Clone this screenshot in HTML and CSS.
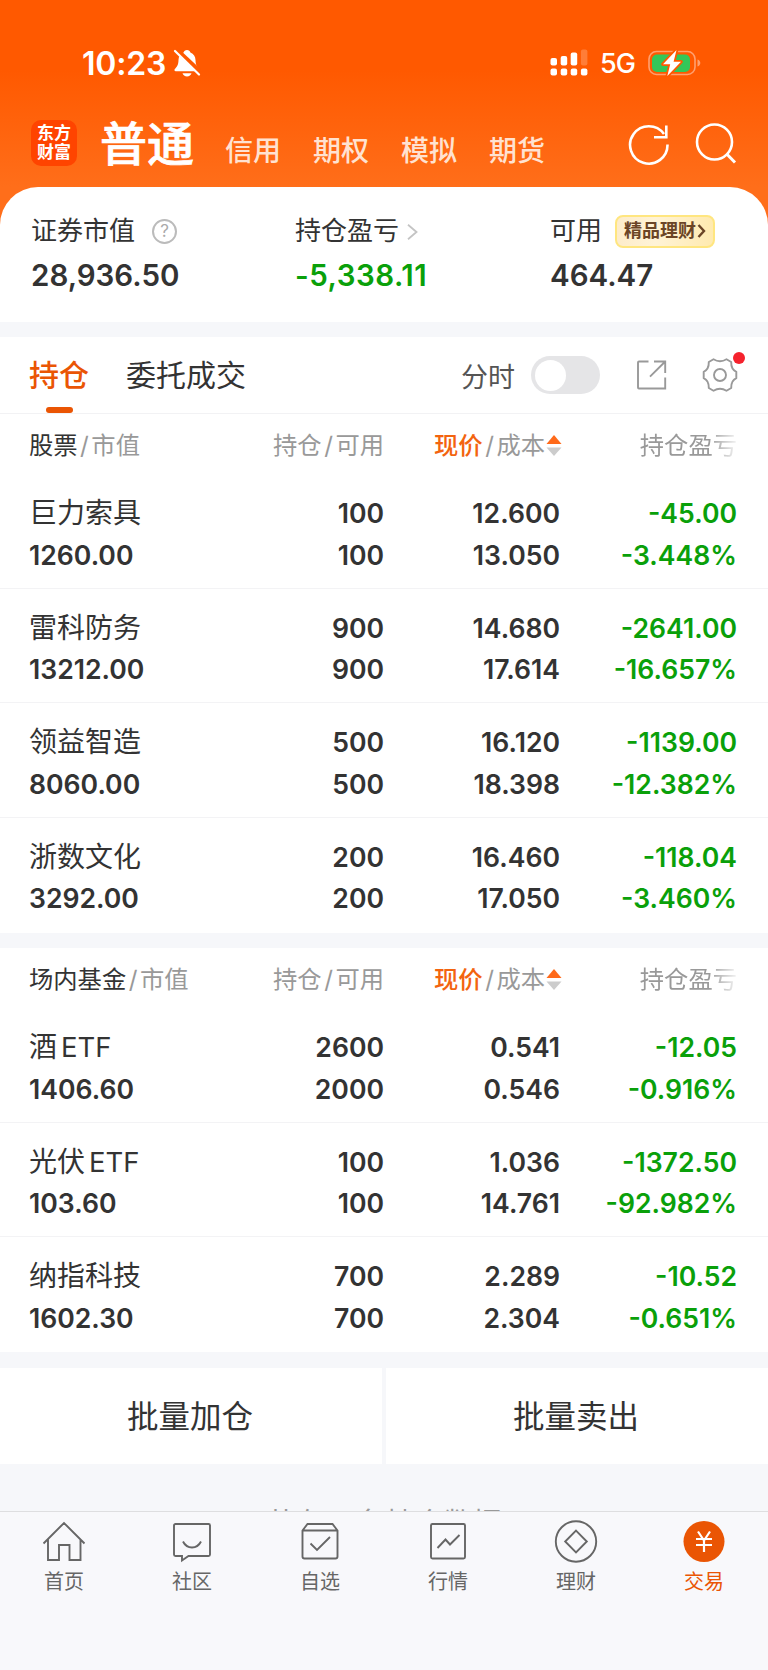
FILE: index.html
```html
<!DOCTYPE html>
<html lang="zh-CN">
<head>
    <meta charset="UTF-8">
    <meta name="viewport" content="width=device-width, initial-scale=1.0">
    <link rel="stylesheet" href="styles.css">
    <title>普通交易</title>
</head>
<body>
    <div class="app">
        <header class="header">
            <div class="status">
                <span class="time">10:23</span>
                <svg class="bell" width="28" height="30" viewBox="0 0 28 30">
                    <path d="M14 2c-1.800 0-3 1-3.400 2.500C7.300 5.800 5.600 8.600 5.500 12c-.1 5-1.500 6.800-3.700 9-.7.900-.3 2.200.9 2.200h22.600c1.200 0 1.600-1.300.9-2.200-2.200-2.200-3.600-4-3.700-9-.1-3.400-1.800-6.200-5.100-7.500C17 3 15.800 2 14 2z" fill="#fff"/>
                    <path d="M9.500 25.200h9c-.5 1.900-2.300 3.300-4.500 3.300s-4-1.400-4.500-3.300z" fill="#fff"/>
                    <path d="M3 1.500L28 25" stroke="#ff5900" stroke-width="5"/>
                    <path d="M2 3L26 26.500" stroke="#fff" stroke-width="2.200" stroke-linecap="round"/>
                </svg>
                <svg class="signal" width="38" height="28" viewBox="0 0 38 28" fill="#fff">
                    <rect x="0.500" y="9" width="6.500" height="7.500" rx="2"/>
                    <rect x="10.700" y="7" width="6.500" height="9.500" rx="2"/>
                    <rect x="20.700" y="3.500" width="6.500" height="13" rx="2"/>
                    <rect x="30.900" y="0.500" width="6.500" height="16" rx="2" opacity=".22"/>
                    <rect x="0.500" y="19.500" width="6.500" height="7" rx="2"/>
                    <rect x="10.700" y="19.500" width="6.500" height="7" rx="2"/>
                    <rect x="20.700" y="19.500" width="6.500" height="7" rx="2"/>
                    <rect x="30.900" y="19.500" width="6.500" height="7" rx="2"/>
                </svg>
                <span class="net">5G</span>
                <svg class="battery" width="53" height="28" viewBox="0 0 53 28">
                    <rect x="1" y="2.500" width="46" height="23" rx="7.500" fill="none" stroke="#ffa070" stroke-width="1.600"/>
                    <path d="M49.500 10.500c2 .6 2.800 2 2.800 3.500s-.8 2.900-2.800 3.500z" fill="#ffa070"/>
                    <rect x="4" y="5.500" width="38" height="17.500" rx="5" fill="#34c759"/>
                    <path d="M28.500 1L15 15.200h7.200L19.300 27 33 12.800h-7.400z" fill="#fff" stroke="#ff5900" stroke-width="3.500" stroke-linejoin="round" paint-order="stroke"/>
                </svg>
            </div>
            <div class="nav-top">
                <div class="logo"><span>东方</span><span>财富</span></div>
                <div class="account-tabs">
                    <span class="account-active">普通</span>
                    <span class="account">信用</span>
                    <span class="account">期权</span>
                    <span class="account">模拟</span>
                    <span class="account">期货</span>
                </div>
                <svg class="icon-refresh" width="42" height="44" viewBox="0 0 42 44" fill="none" stroke="#fff" stroke-width="2.600">
                    <path d="M39.500 22.500A18.700 18.700 0 1 1 36 12"/>
                    <path d="M38.300 3.500v11.800H26"/>
                </svg>
                <svg class="icon-search" width="42" height="44" viewBox="0 0 42 44" fill="none" stroke="#fff" stroke-width="2.600">
                    <circle cx="19.500" cy="20" r="17.500"/>
                    <path d="M32 32.300L40 40.500" stroke-width="3"/>
                </svg>
            </div>
        </header>

        <section class="summary">
            <div class="summary-item">
                <div class="summary-label">证券市值<span class="help">?</span></div>
                <div class="summary-value">28,936.50</div>
            </div>
            <div class="summary-item">
                <div class="summary-label">持仓盈亏
                    <svg class="chevron" width="11" height="16" viewBox="0 0 11 16" fill="none" stroke="#c4c4c4" stroke-width="1.800"><path d="M1 .8L9.500 8 1 15.200"/></svg>
                </div>
                <div class="summary-value profit down">-5,338.11</div>
            </div>
            <div class="summary-item">
                <div class="summary-label">可用
                    <span class="badge">精品理财<svg width="9" height="14" viewBox="0 0 9 14" fill="none" stroke="#6b4526" stroke-width="2.400"><path d="M1.500 1l5.500 6-5.500 6"/></svg></span>
                </div>
                <div class="summary-value">464.47</div>
            </div>
        </section>

        <section class="toolbar">
            <span class="tab tab-active">持仓</span>
            <span class="tab">委托成交</span>
            <span class="minute">分时</span>
            <span class="switch"></span>
            <svg class="icon-share" width="32" height="32" viewBox="0 0 32 32" fill="none" stroke="#999" stroke-width="1.900">
                <path d="M12.500 2.500H3a1 1 0 0 0-1 1v25a1 1 0 0 0 1 1h26.200V18.500"/>
                <path d="M18 2.500h11.200v11.500M29.200 2.500L14 17.700"/>
            </svg>
            <span class="settings">
                <svg width="36" height="36" viewBox="0 0 36 36" fill="none" stroke="#999" stroke-width="1.900" stroke-linejoin="round">
                    <path d="M11.500 2.300Q18 6.300 24.500 2.300L29.200 5Q29 12.300 34.300 14.800V21.200Q29 23.700 29.200 31L24.500 33.700Q18 29.700 11.500 33.700L6.800 31Q7 23.700 1.700 21.200V14.800Q7 12.300 6.800 5Z"/>
                    <circle cx="18" cy="18" r="6"/>
                </svg>
                <i class="dot"></i>
            </span>
        </section>

        <section class="holdings">
            <div class="row-head">
                <div><b>股票</b><i>/</i>市值</div>
                <div>持仓<i>/</i>可用</div>
                <div class="sort"><em>现价</em><i>/</i>成本<svg width="16" height="21" viewBox="0 0 16 21"><path d="M8 0l7.500 9H.5z" fill="#ff6a1a"/><path d="M8 21l7.500-8.500H.5z" fill="#ccc"/></svg></div>
                <div class="fade">持仓盈亏</div>
            </div>
            <div class="row">
                <div><span class="name">巨力索具</span><span>1260.00</span></div>
                <div><span>100</span><span>100</span></div>
                <div><span>12.600</span><span>13.050</span></div>
                <div class="down"><span>-45.00</span><span>-3.448%</span></div>
            </div>
            <div class="row">
                <div><span class="name">雷科防务</span><span>13212.00</span></div>
                <div><span>900</span><span>900</span></div>
                <div><span>14.680</span><span>17.614</span></div>
                <div class="down"><span>-2641.00</span><span>-16.657%</span></div>
            </div>
            <div class="row">
                <div><span class="name">领益智造</span><span>8060.00</span></div>
                <div><span>500</span><span>500</span></div>
                <div><span>16.120</span><span>18.398</span></div>
                <div class="down"><span>-1139.00</span><span>-12.382%</span></div>
            </div>
            <div class="row">
                <div><span class="name">浙数文化</span><span>3292.00</span></div>
                <div><span>200</span><span>200</span></div>
                <div><span>16.460</span><span>17.050</span></div>
                <div class="down"><span>-118.04</span><span>-3.460%</span></div>
            </div>
        </section>

        <section class="holdings">
            <div class="row-head">
                <div><b>场内基金</b><i>/</i>市值</div>
                <div>持仓<i>/</i>可用</div>
                <div class="sort"><em>现价</em><i>/</i>成本<svg width="16" height="21" viewBox="0 0 16 21"><path d="M8 0l7.500 9H.5z" fill="#ff6a1a"/><path d="M8 21l7.500-8.500H.5z" fill="#ccc"/></svg></div>
                <div class="fade">持仓盈亏</div>
            </div>
            <div class="row">
                <div><span class="name">酒<u>ETF</u></span><span>1406.60</span></div>
                <div><span>2600</span><span>2000</span></div>
                <div><span>0.541</span><span>0.546</span></div>
                <div class="down"><span>-12.05</span><span>-0.916%</span></div>
            </div>
            <div class="row">
                <div><span class="name">光伏<u>ETF</u></span><span>103.60</span></div>
                <div><span>100</span><span>100</span></div>
                <div><span>1.036</span><span>14.761</span></div>
                <div class="down"><span>-1372.50</span><span>-92.982%</span></div>
            </div>
            <div class="row">
                <div><span class="name">纳指科技</span><span>1602.30</span></div>
                <div><span>700</span><span>700</span></div>
                <div><span>2.289</span><span>2.304</span></div>
                <div class="down"><span>-10.52</span><span>-0.651%</span></div>
            </div>
        </section>

        <div class="batch">
            <div class="batch-btn">批量加仓</div>
            <div class="batch-btn">批量卖出</div>
        </div>
        <div class="total"><span>共有 7 条持仓数据</span></div>

        <nav class="tabbar">
            <div class="tabbar-item">
                <svg width="44" height="44" viewBox="0 0 44 44"><path d="M1.500 23.500L22 3l20.500 20.500M6 19.500V40h11V25h10.500v15H38.500V19.500"/></svg>
                <span>首页</span>
            </div>
            <div class="tabbar-item">
                <svg width="44" height="44" viewBox="0 0 44 44"><path d="M11 36H5.500a1.500 1.500 0 0 1-1.500-1.500V5.500A1.500 1.500 0 0 1 5.500 4h33A1.500 1.500 0 0 1 40 5.500v29a1.500 1.500 0 0 1-1.500 1.500H18.500L12 40.500V36zM13 21.500c4 8 14 8 18 0"/></svg>
                <span>社区</span>
            </div>
            <div class="tabbar-item">
                <svg width="44" height="44" viewBox="0 0 44 44"><path d="M4.500 10.500L9.500 4h25l5 6.500V36.500a2 2 0 0 1-2 2h-31a2 2 0 0 1-2-2zM4.500 10.500h35M12.500 23.500l6.500 6.500L32 17"/></svg>
                <span>自选</span>
            </div>
            <div class="tabbar-item">
                <svg width="44" height="44" viewBox="0 0 44 44"><rect x="5" y="4" width="34" height="34.500" rx="1.500"/><path d="M11.500 28l8-8.500L24 24.500l9.500-9.500"/></svg>
                <span>行情</span>
            </div>
            <div class="tabbar-item">
                <svg width="44" height="44" viewBox="0 0 44 44"><circle cx="22" cy="21.500" r="20.200"/><path d="M22 10.700L32.800 21.500 22 32.300 11.200 21.500z"/></svg>
                <span>理财</span>
            </div>
            <div class="tabbar-item tabbar-active">
                <svg width="44" height="44" viewBox="0 0 44 44"><circle class="coin" cx="22" cy="21.500" r="20.500"/><path class="yen" d="M16 11.500l6 9 6-9M22 20.500V32M14 19h16M14 25h16"/></svg>
                <span>交易</span>
            </div>
        </nav>
    </div>
</body>
</html>
```

FILE: styles.css
```css
* {
    box-sizing: border-box;
}

body {
    margin: 0;
    background-color: #f6f7fa;
    font-family: Inter, "Noto Sans CJK SC", sans-serif;
    color: #333;
}

.app {
    width: 768px;
    height: 1670px;
    overflow: hidden;
    display: flex;
    flex-direction: column;
}

svg {
    display: block;
    flex: none;
}

b, i, em, u {
    font-style: normal;
    font-weight: inherit;
    text-decoration: none;
}

.down {
    color: #0aa00a;
}

/* header */
.header {
    height: 229px;
    flex: none;
    padding-top: 42px;
    background: linear-gradient(#ff5900 0, #ff5900 70px, #ff6e1a 187px);
    color: #fff;
}

.status {
    height: 42px;
    padding: 0 67px 0 82px;
    display: flex;
    align-items: center;
}

.time {
    width: 91px;
    font-size: 32px;
    font-weight: 600;
    letter-spacing: -0.2px;
}

.signal {
    margin-left: auto;
}

.net {
    width: 48px;
    margin-left: 12px;
    font-size: 27px;
    font-weight: 500;
    letter-spacing: -1px;
}

.nav-top {
    height: 76px;
    padding: 0 31px;
    display: flex;
    align-items: center;
    margin-top: 22px;
}

.logo {
    width: 46px;
    height: 46px;
    margin-top: -2px;
    border-radius: 10px;
    background-color: #ff4400;
    display: flex;
    flex-direction: column;
    align-items: center;
    justify-content: center;
    font-size: 17px;
    line-height: 19px;
    font-weight: 700;
}

.account-tabs {
    flex: 1;
    display: flex;
    align-items: center;
    margin-left: 23px;
    line-height: 60px;
}

.account-active {
    width: 125px;
    font-size: 47px;
    font-weight: 500;
    -webkit-text-stroke: 0.7px #fff;
}

.account {
    width: 88px;
    padding-top: 13px;
    font-size: 28px;
    font-weight: 500;
    color: #ffe2d1;
}

.icon-search {
    margin-left: 25px;
}

/* summary */
.summary {
    height: 135px;
    flex: none;
    margin-top: -42px;
    padding: 24px 0 0 31px;
    border-radius: 38px 38px 0 0;
    background-color: #fff;
    display: grid;
    grid-template-columns: 264px 255px 1fr;
}

.summary-label {
    height: 42px;
    padding-bottom: 2px;
    display: flex;
    align-items: center;
    font-size: 26px;
    line-height: 36px;
}

.help {
    width: 25px;
    height: 25px;
    margin: 1px 0 0 17px;
    border: 2px solid #bbb;
    border-radius: 50%;
    font-size: 17px;
    line-height: 21px;
    text-align: center;
    color: #aaa;
}

.chevron {
    margin: 2px 0 0 8px;
}

.badge {
    width: 100px;
    height: 33px;
    margin: 0 0 0 13px;
    border: 2px solid #ffe680;
    border-radius: 8px;
    background: linear-gradient(90deg, #fdeccb, #fff3d6 40%, #ffeab0);
    display: flex;
    align-items: center;
    justify-content: center;
    font-size: 18px;
    line-height: 27px;
    padding-bottom: 2px;
    font-weight: 700;
    color: #6b4526;
}

.badge svg {
    margin: 2px 0 0 1px;
}

.summary-value {
    font-size: 29.5px;
    line-height: 44px;
    font-weight: 600;
}

.profit {
    letter-spacing: 0.5px;
}

/* tabs */
.toolbar {
    height: 77px;
    flex: none;
    margin-top: 15px;
    padding: 0 30px 0 29px;
    border-bottom: 1px solid #f2f2f4;
    background-color: #fff;
    display: flex;
    align-items: center;
}

.tab {
    height: 76px;
    margin-right: 37px;
    font-size: 30px;
    line-height: 76px;
}

.tab-active {
    position: relative;
    font-weight: 500;
    color: #ea5504;
}

.tab-active::after {
    content: "";
    position: absolute;
    left: 17px;
    bottom: 0;
    width: 27px;
    height: 6px;
    border-radius: 3px;
    background-color: #ea5504;
}

.minute {
    margin-left: auto;
    font-size: 27px;
    color: #555;
}

.switch {
    width: 69px;
    height: 38px;
    margin: 0 36px 0 16px;
    padding: 4px;
    border-radius: 19px;
    background-color: #e5e5e7;
}

.switch::before {
    content: "";
    display: block;
    width: 31px;
    height: 31px;
    border-radius: 50%;
    background-color: #fff;
}

.settings {
    position: relative;
    margin-left: 34px;
}

.dot {
    position: absolute;
    right: -7px;
    top: -5px;
    width: 12px;
    height: 12px;
    border-radius: 50%;
    background-color: #f5222d;
}

/* holdings table */
.holdings {
    flex: none;
    margin-bottom: 15.5px;
    background-color: #fff;
}

.row-head, .row {
    display: grid;
    grid-template-columns: 195px 160px 176px 177px;
    padding: 0 31px 0 29px;
    text-align: right;
}

.row-head div:first-child, .row div:first-child {
    text-align: left;
}

.row-head {
    height: 60px;
    padding-top: 1px;
    font-size: 24.300px;
    line-height: 60px;
    color: #999;
}

.row-head b {
    color: #333;
}

.row-head i {
    margin: 0 2.500px;
}

.row-head em {
    font-weight: 500;
    color: #f3640f;
}

.row-head .sort {
    display: flex;
    align-items: center;
    justify-content: flex-end;
    margin-right: -2px;
}

.row-head .sort svg {
    margin-left: 1px;
}

.fade {
    -webkit-mask-image: linear-gradient(90deg, #000 84%, transparent 102%);
    mask-image: linear-gradient(90deg, #000 84%, transparent 102%);
}

.row {
    height: 114.66px;
    padding-top: 19px;
    border-bottom: 1px solid #f3f3f5;
    font-size: 26.600px;
    line-height: 41.500px;
    font-weight: 600;
}

.row:last-child {
    border-bottom: none;
}

.row span {
    display: block;
}

.row .name {
    font-size: 28px;
    font-weight: 400;
}

.name u {
    margin-left: 4px;
    font-size: 27.500px;
}

/* bottom */
.batch {
    height: 96px;
    flex: none;
    display: grid;
    grid-template-columns: 1fr 1fr;
    gap: 4px;
}

.batch-btn {
    padding-right: 2px;
    background-color: #fff;
    font-size: 31.500px;
    line-height: 98px;
    height: 96px;
    text-align: center;
}

/* the line runs on under the tab bar */
.total {
    height: 47px;
    flex: none;
    padding-top: 36px;
    overflow: hidden;
    font-size: 29px;
    line-height: 48px;
    text-align: center;
    color: #999;
}

.tabbar {
    flex: 1;
    padding-top: 8px;
    border-top: 1px solid #dedee0;
    background-color: #f8f8fb;
    display: grid;
    grid-template-columns: repeat(6, 1fr);
}

.tabbar-item {
    display: flex;
    flex-direction: column;
    align-items: center;
    font-size: 20px;
    line-height: 36px;
    color: #666;
}

.tabbar-item svg {
    fill: none;
    stroke: #666;
    stroke-width: 1.900;
}

.tabbar-active {
    color: #ea5504;
}

.tabbar-item .coin {
    fill: #ea5504;
    stroke: none;
}

.tabbar-item .yen {
    stroke: #fff;
    stroke-width: 2.200;
}
```
